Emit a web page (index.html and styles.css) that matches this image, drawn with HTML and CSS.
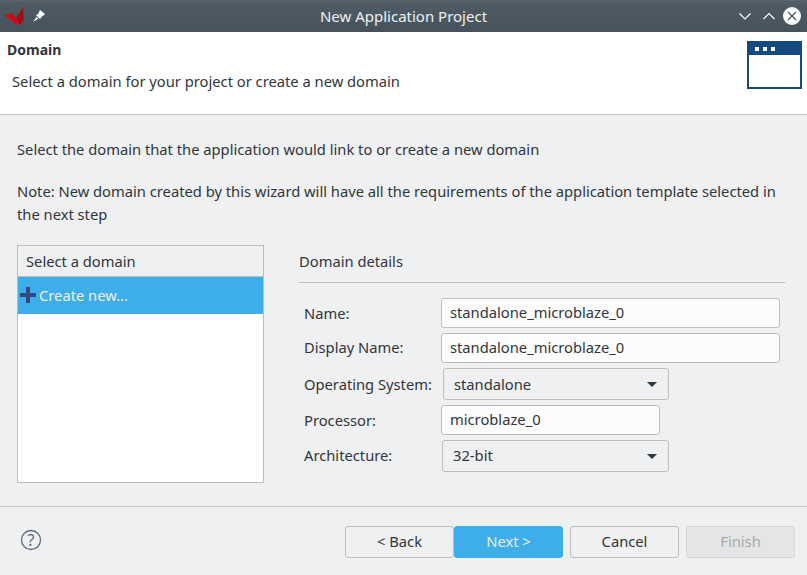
FILE: index.html
```html
<!DOCTYPE html>
<html lang="en">
<head>
    <meta charset="UTF-8">
    <title>New Application Project</title>
    <link rel="stylesheet" href="styles.css">
</head>
<body>
    <div class="dialog">
        <div class="titlebar">
            <div class="title-left">
                <svg class="logo" width="20" height="20" viewBox="5 6 20 20">
                    <path d="M5 15.500 L11 13 L16.500 17.500 Q20 13 23 7 L23.500 20 L20 25 L14 23 Z" fill="#c20f1a"/>
                    <path d="M16.500 17.500 Q20 13 23 7 L23.500 20 L20 25 Z" fill="#a00d16"/>
                </svg>
                <svg class="pin" width="12" height="12" viewBox="0 0 12 12">
                    <path d="M7 0 L12 4 L8.500 7 L7 9 L3 5 L5 4 Z M3.500 7 L0 12 L5.500 8.500 Z" fill="#fff"/>
                </svg>
            </div>
            <div class="title-text">New Application Project</div>
            <div class="title-buttons">
                <svg width="14" height="14" viewBox="0 0 14 14"><path d="M1.500 4.500 L7 10 L12.500 4.500" fill="none" stroke="#fcfcfc" stroke-width="1.200"/></svg>
                <svg width="14" height="14" viewBox="0 0 14 14"><path d="M1.500 10 L7 4.500 L12.500 10" fill="none" stroke="#fcfcfc" stroke-width="1.200"/></svg>
                <svg class="close" width="18" height="18" viewBox="0 0 18 18"><circle cx="9" cy="9" r="9" fill="#fcfcfc"/><path d="M5 5 L13 13 M13 5 L5 13" stroke="#4d5962" stroke-width="1.300"/></svg>
            </div>
        </div>

        <div class="banner">
            <div class="banner-text">
                <h1>Domain</h1>
                <p>Select a domain for your project or create a new domain</p>
            </div>
            <svg class="banner-icon" width="55" height="48" viewBox="0 0 55 48">
                <rect width="55" height="48" fill="#134a80"/>
                <rect x="2" y="14" width="51" height="32" fill="#fff"/>
                <rect x="8" y="6" width="4" height="4" fill="#fff"/>
                <rect x="16" y="6" width="4" height="4" fill="#fff"/>
                <rect x="24" y="6" width="4" height="4" fill="#fff"/>
            </svg>
        </div>

        <div class="content">
            <p class="intro">Select the domain that the application would link to or create a new domain</p>
            <p class="note">Note: New domain created by this wizard will have all the requirements of the application template selected in the next step</p>

            <div class="columns">
                <div class="domain-list">
                    <div class="list-head">Select a domain</div>
                    <div class="list-item">
                        <svg width="16" height="16" viewBox="0 0 16 16"><path d="M6 0 H10 V6 H16 V10 H10 V16 H6 V10 H0 V6 H6 Z" fill="#2e4a80"/></svg>
                        <span>Create new...</span>
                    </div>
                </div>

                <div class="details">
                    <div class="details-head">Domain details</div>
                    <div class="form">
                        <div class="row row-name">
                            <label>Name:</label>
                            <div class="input input-wide">standalone_microblaze_0</div>
                        </div>
                        <div class="row row-display">
                            <label>Display Name:</label>
                            <div class="input input-wide">standalone_microblaze_0</div>
                        </div>
                        <div class="row row-os">
                            <label>Operating System:</label>
                            <div class="select">standalone<span class="arrow"></span></div>
                        </div>
                        <div class="row row-proc">
                            <label>Processor:</label>
                            <div class="input input-proc">microblaze_0</div>
                        </div>
                        <div class="row row-arch">
                            <label>Architecture:</label>
                            <div class="select select-arch">32-bit<span class="arrow"></span></div>
                        </div>
                    </div>
                </div>
            </div>
        </div>

        <div class="footer">
            <svg class="help" width="22" height="22" viewBox="0 0 22 22">
                <circle cx="11" cy="11" r="9.500" fill="none" stroke="#5d6b80" stroke-width="1.300"/>
                <text x="11" y="16.500" text-anchor="middle" class="help-mark">?</text>
            </svg>
            <div class="buttons">
                <div class="btn-pair">
                    <button class="btn">&lt; Back</button>
                    <button class="btn btn-primary">Next &gt;</button>
                </div>
                <button class="btn">Cancel</button>
                <button class="btn btn-disabled">Finish</button>
            </div>
        </div>
    </div>
</body>
</html>
```

FILE: styles.css
```css
* {
    box-sizing: border-box;
}
body {
    margin: 0;
    font-family: "Noto Sans", sans-serif;
    font-size: 14.72px;
    color: #31363b;
    background-color: #eff0f1;
}
.dialog {
    width: 807px;
    height: 575px;
    display: flex;
    flex-direction: column;
    overflow: hidden;
}
.titlebar {
    height: 32px;
    flex: none;
    display: flex;
    align-items: center;
    justify-content: space-between;
    position: relative;
    background: linear-gradient(#5d666d 0, #4f5b64 3px, #47535c 100%);
    color: #eff0f1;
}
.title-left {
    display: flex;
    align-items: center;
    padding-left: 5px;
    gap: 8px;
}
.title-text {
    position: absolute;
    left: 0;
    right: 0;
    text-align: center;
    font-size: 15px;
}
.title-buttons {
    display: flex;
    align-items: center;
    gap: 10px;
    padding-right: 6px;
}
.close {
    margin-left: -3px;
    margin-right: 0;
}
.title-buttons .close {
    margin-left: -3px;
}
.banner {
    height: 83px;
    flex: none;
    display: flex;
    justify-content: space-between;
    background-color: #fff;
    border-bottom: 1px solid #c4c6c8;
    padding: 8px 5px 0 7px;
}
.banner h1 {
    margin: 0;
    font-size: 14px;
    font-weight: 700;
    line-height: 20px;
}
.banner p {
    margin: 11px 0 0 5px;
    line-height: 20px;
}
.banner-icon {
    margin-top: 1px;
}
.content {
    flex: 1;
    padding: 24px 0 0 17px;
}
.content p {
    margin: 0;
    line-height: 20px;
}
.note {
    padding-top: 21px;
    width: 780px;
    line-height: 23px !important;
}
.columns {
    display: flex;
    margin-top: 19px;
}
.domain-list {
    width: 247px;
    height: 238px;
    background-color: #fff;
    border: 1px solid #bcbebf;
}
.list-head {
    height: 31px;
    line-height: 31px;
    padding-left: 8px;
    background-color: #eff0f1;
    border-bottom: 1px solid #bcbebf;
}
.list-item {
    height: 37px;
    display: flex;
    align-items: center;
    gap: 3px;
    padding-left: 2px;
    padding-bottom: 1px;
    background-color: #3daee9;
    color: #eff0f1;
}
.details {
    width: 486px;
    margin-left: 35px;
}
.details-head {
    height: 38px;
    line-height: 33px;
    border-bottom: 1px solid #bcbebf;
}
.form {
    padding: 15px 0 0 5px;
}
.row {
    display: flex;
    align-items: center;
}
.row label {
    flex: none;
}
.row-name label,
.row-display label {
    width: 137px;
}
.row-display {
    margin-top: 5px;
}
.row-display label {
    padding-bottom: 2px;
}
.row-os {
    margin-top: 5px;
}
.row-os label {
    width: 139px;
}
.row-proc {
    margin-top: 5px;
}
.row-proc label {
    width: 137px;
}
.row-arch {
    margin-top: 5px;
}
.row-arch label {
    width: 138px;
    padding-bottom: 2px;
}
.input {
    height: 30px;
    line-height: 26px;
    padding-left: 8px;
    background-color: #fcfcfc;
    border: 1px solid #bcbebf;
    border-radius: 3px;
}
.input-wide {
    width: 339px;
}
.input-proc {
    width: 219px;
}
.select {
    width: 226px;
    height: 32px;
    line-height: 30px;
    padding-left: 10px;
    position: relative;
    background-color: #eff0f1;
    border: 1px solid #bcbebf;
    border-radius: 3px;
}
.select-arch {
    width: 227px;
    line-height: 28px;
}
.arrow {
    position: absolute;
    right: 11px;
    top: 13px;
    border-left: 5px solid transparent;
    border-right: 5px solid transparent;
    border-top: 5px solid #31363b;
}
.footer {
    height: 69px;
    flex: none;
    display: flex;
    justify-content: space-between;
    border-top: 1px solid #c4c6c8;
    padding: 19px 12px 0 20px;
}
.help {
    margin-top: 3px;
}
.help-mark {
    font-family: "Noto Sans", sans-serif;
    font-size: 16px;
    fill: #5d6b80;
}
.buttons {
    display: flex;
    gap: 7px;
}
.btn-pair {
    display: flex;
}
.btn {
    width: 109px;
    height: 32px;
    padding: 0 0 2px;
    font-family: inherit;
    font-size: 14.72px;
    color: #31363b;
    background-color: #eff0f1;
    border: 1px solid #bcbebf;
    border-radius: 3px;
}
.btn-primary {
    background-color: #3daee9;
    border-color: #3daee9;
    color: #eff0f1;
}
.btn-disabled {
    background-color: #e3e5e7;
    border-color: #d5d7d9;
    color: #a8aaac;
}
```
